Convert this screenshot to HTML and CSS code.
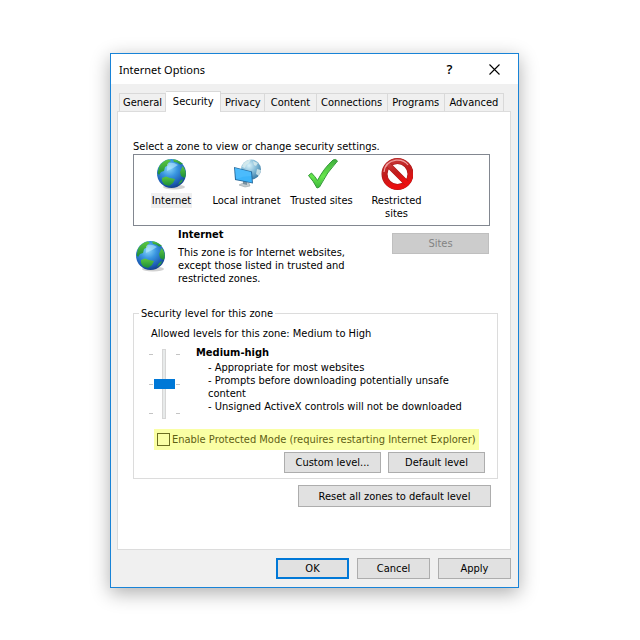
FILE: index.html
```html
<!DOCTYPE html>
<html lang="en">

<head>
    <meta charset="UTF-8">
    <title>Internet Options</title>
    <link rel="stylesheet" href="styles.css">
</head>

<body>
    <!-- shared globe drawing -->
    <svg class="defs" width="0" height="0" aria-hidden="true">
        <defs>
            <radialGradient id="sea" cx="0.42" cy="0.32" r="0.7">
                <stop offset="0" stop-color="#8cd8fa" />
                <stop offset="0.4" stop-color="#3a96e0" />
                <stop offset="0.8" stop-color="#1c5cb4" />
                <stop offset="1" stop-color="#123e88" />
            </radialGradient>
            <radialGradient id="pale-sea" cx="0.4" cy="0.3" r="0.8">
                <stop offset="0" stop-color="#d8f2fa" />
                <stop offset="0.5" stop-color="#7cb6d4" />
                <stop offset="1" stop-color="#2c6a96" />
            </radialGradient>
            <linearGradient id="land" x1="0" y1="0" x2="0" y2="1">
                <stop offset="0" stop-color="#5cc840" />
                <stop offset="1" stop-color="#1c8c38" />
            </linearGradient>
            <linearGradient id="tick" x1="0" y1="0" x2="0" y2="1">
                <stop offset="0" stop-color="#3fae3c" />
                <stop offset="0.6" stop-color="#66e64c" />
                <stop offset="1" stop-color="#3cb83a" />
            </linearGradient>
            <linearGradient id="stop" x1="0" y1="0" x2="0.3" y2="1">
                <stop offset="0" stop-color="#c83c3c" />
                <stop offset="0.5" stop-color="#c01c1c" />
                <stop offset="1" stop-color="#ea1010" />
            </linearGradient>
            <symbol id="globe" viewBox="0 0 32 32">
                <ellipse cx="18" cy="29" rx="11" ry="2.5" fill="#999" opacity="0.45" />
                <circle cx="15.500" cy="15.500" r="14.500" fill="url(#sea)" />
                <path d="M3 9C5 5 9 2 13 1.500L15 3L12 5L12.500 7L9 9L8 13L5 14L3 17L1.600 15Z" fill="url(#land)" />
                <path d="M17 1.200C21 1.500 25 4 27 6L24 6.500L21 4.500L18 4Z" fill="url(#land)" />
                <path d="M26.500 8L28 10C30.500 14 30 18 28.500 20L25 18L24 14Z" fill="url(#land)" />
                <path d="M6 20L10 18.500L14 20L19 21L17 25L13 28L8 26.500L6 23Z" fill="url(#land)" />
                <path d="M24 23L27 21L26 24L22 27Z" fill="#2c9c44" />
                <path d="M11 6Q16 3 22 7Q18 10 11 13Z" fill="#c8f0ff" opacity="0.5" />
            </symbol>
        </defs>
    </svg>

    <div class="dialog">
        <div class="titlebar">
            <span class="title">Internet Options</span>
            <button class="title-btn help" aria-label="Help">?</button>
            <button class="title-btn" aria-label="Close">
                <svg width="11" height="11" viewBox="0 0 11 11">
                    <path d="M0.500 0.500L10.500 10.500M10.500 0.500L0.500 10.500" stroke="#000" stroke-width="1.100" />
                </svg>
            </button>
        </div>

        <div class="content">
            <div class="tabs" role="tablist">
                <button class="tab" role="tab">General</button>
                <button class="tab active" role="tab" aria-selected="true">Security</button>
                <button class="tab" role="tab">Privacy</button>
                <button class="tab" role="tab">Content</button>
                <button class="tab" role="tab">Connections</button>
                <button class="tab" role="tab">Programs</button>
                <button class="tab" role="tab">Advanced</button>
            </div>

            <div class="panel">
                <div class="label">Select a zone to view or change security settings.</div>
                <div class="zones">
                    <button class="zone">
                        <svg width="32" height="32"><use href="#globe" /></svg>
                        <span class="zone-name selected">Internet</span>
                    </button>
                    <button class="zone">
                        <svg width="32" height="32" viewBox="0 0 32 32">
                            <circle cx="20" cy="11.500" r="10" fill="url(#pale-sea)" />
                            <path d="M12 6Q15 2 20 1.500L18 5L15 7L14 10L11 9ZM22 3L27 5L25 8L23 7ZM26 11L30 12L28 18L25 16Z" fill="#dceeed" opacity="0.8" />
                            <path d="M8 27L14 24L18 25L19 28L14 29Z" fill="#c4ccd0" stroke="#8b989f" stroke-width="0.500" />
                            <path d="M12 22L16 23L16 27L12 26Z" fill="#7890a0" />
                            <path d="M3 9L21 13.500L22 25.500L4 22Z" fill="#276a9c" />
                            <path d="M4 10L20 14L21 24.500L5 21.200Z" fill="#3cb4fa" />
                            <path d="M4 10L20 14L20.300 18Q12 18 5 21Z" fill="#66c8ff" opacity="0.35" />
                        </svg>
                        <span class="zone-name">Local intranet</span>
                    </button>
                    <button class="zone">
                        <svg width="32" height="32" viewBox="0 0 32 32">
                            <path d="M2.500 17.500L5.500 15Q9 18.500 11.500 22.500Q18 10 27 2Q30 0.500 31.500 3Q21 14 13.500 29L11 30Q7.500 23 2.500 17.500Z" fill="url(#tick)" stroke="#339838" stroke-width="1" />
                        </svg>
                        <span class="zone-name">Trusted sites</span>
                    </button>
                    <button class="zone">
                        <svg width="32" height="32" viewBox="0 0 32 32">
                            <circle cx="16.500" cy="16" r="13" fill="#fff" stroke="#a81818" stroke-width="6" />
                            <circle cx="16.500" cy="16" r="13" fill="none" stroke="url(#stop)" stroke-width="5" />
                            <path d="M7.500 7L25.500 25" stroke="#a81818" stroke-width="5.600" />
                            <path d="M7 6.500L26 25.500" stroke="url(#stop)" stroke-width="4.600" />
                            <path d="M3 14Q4 4 15 2.200Q23 1.500 27 7" fill="none" stroke="#f0a0a0" stroke-width="1.200" />
                        </svg>
                        <span class="zone-name">Restricted sites</span>
                    </button>
                </div>

                <div class="zone-info">
                    <svg class="info-icon" width="32" height="32"><use href="#globe" /></svg>
                    <div class="info-text">
                        <b>Internet</b>
                        <p>This zone is for Internet websites, except those listed in trusted and restricted zones.</p>
                    </div>
                    <button class="btn" disabled>Sites</button>
                </div>

                <fieldset class="level-box">
                    <legend>Security level for this zone</legend>
                    <label class="allowed" for="level">Allowed levels for this zone: Medium to High</label>
                    <div class="level">
                        <div class="slider">
                            <div class="ticks"><i></i><i></i><i></i></div>
                            <input type="range" id="level" min="0" max="2" value="1">
                            <div class="ticks"><i></i><i></i><i></i></div>
                        </div>
                        <div class="level-text">
                            <b>Medium-high</b>
                            <ul>
                                <li>- Appropriate for most websites</li>
                                <li>- Prompts before downloading potentially unsafe<br>content</li>
                                <li>- Unsigned ActiveX controls will not be downloaded</li>
                            </ul>
                        </div>
                    </div>
                    <label class="protected">
                        <input type="checkbox" id="protected-mode">
                        <span>Enable Protected Mode (requires restarting Internet Explorer)</span>
                    </label>
                    <div class="level-buttons">
                        <button class="btn">Custom level...</button>
                        <button class="btn">Default level</button>
                    </div>
                </fieldset>

                <div class="reset">
                    <button class="btn wide">Reset all zones to default level</button>
                </div>
            </div>

            <div class="footer">
                <button class="btn ok">OK</button>
                <button class="btn">Cancel</button>
                <button class="btn">Apply</button>
            </div>
        </div>
    </div>
</body>

</html>
```

FILE: styles.css
```css
* {
    box-sizing: border-box;
}

body {
    margin: 0;
    padding: 53px 121px 52px 110px;
    background-color: #fff;
    color: #000;
    font-family: "DejaVu Sans Condensed", "Noto Sans", sans-serif;
    font-size: 11px;
    line-height: 13px;
}

button {
    font: inherit;
    color: inherit;
    padding: 0;
    white-space: nowrap;
}

.defs {
    position: absolute;
}

.dialog {
    border: 1px solid #1883d7;
    background-color: #f0f0f0;
    box-shadow: 0 5px 18px rgba(0, 0, 0, 0.32);
}

.titlebar {
    display: flex;
    align-items: center;
    height: 30px;
    padding: 0 1px 0 8px;
    background-color: #fff;
}

.title {
    flex: 1;
    font-family: "Noto Sans", sans-serif;
}

.title-btn {
    display: flex;
    align-items: center;
    justify-content: center;
    width: 45px;
    height: 28px;
    border: none;
    background: none;
}

.help {
    font-family: "Open Sans", sans-serif;
    font-size: 13px;
    font-weight: 600;
}

.content {
    padding: 7px 7px 8px 6px;
}

/* tabs */
.tabs {
    display: grid;
    grid-template-columns: 47fr 55fr 44fr 51fr 71fr 57fr 59fr;
    align-items: end;
    padding: 0 7px 0 2px;
}

.tab {
    height: 18px;
    border: 1px solid #d9d9d9;
    border-width: 1px 1px 0 0;
    background-color: #f0f0f0;
}

.tab:first-child {
    border-left-width: 1px;
}

.tab.active {
    height: 21px;
    margin-bottom: -1px;
    padding-bottom: 2px;
    background-color: #fff;
    z-index: 1;
}

.panel {
    padding: 28px 12px 42px 15px;
    border: 1px solid #dcdcdc;
    background-color: #fff;
}

/* zone list */
.zones {
    display: flex;
    min-height: 72px;
    margin: 1px 8px 0 0;
    padding: 3px 0 0;
    border: 1px solid #828790;
}

.zone {
    display: flex;
    flex-direction: column;
    align-items: center;
    width: 75px;
    border: none;
    background: none;
}

.zone-name {
    margin-top: 3px;
    padding: 1px;
    white-space: normal;
}

.zone:nth-child(2) .zone-name,
.zone:nth-child(3) .zone-name {
    white-space: nowrap;
}

.selected {
    background-color: #f0f0f0;
}

.zone-info {
    display: flex;
    align-items: flex-start;
    min-height: 81px;
    padding: 2px 9px 0 2px;
}

.info-icon {
    margin-top: 12px;
}

.info-text {
    flex: 1;
    margin-left: 11px;
}

.info-text p {
    max-width: 180px;
    margin: 5px 0 0;
}

b {
    display: block;
}

/* buttons */
.btn {
    width: 97px;
    height: 21px;
    border: 1px solid #adadad;
    background-color: #e1e1e1;
}

.btn:disabled {
    border-color: #bfbfbf;
    background-color: #ccc;
    color: #838383;
}

.zone-info .btn {
    margin-top: 5px;
}

.wide {
    width: 193px;
    height: 22px;
}

/* security level */
.level-box {
    min-width: 0;
    margin: 0;
    padding: 7px 12px 5px 15px;
    border: 1px solid #dcdcdc;
}

.level-box legend {
    margin-left: -10px;
    padding: 0 2px;
}

.allowed {
    display: block;
    padding-left: 2px;
}

.level {
    display: flex;
    margin-top: 6px;
}

.slider {
    display: flex;
    height: 70px;
    margin-top: 3px;
}

.ticks {
    display: flex;
    flex-direction: column;
    justify-content: space-between;
    padding: 5px 0;
}

.ticks:last-child {
    margin-left: 2px;
}

.ticks i {
    width: 4px;
    height: 1px;
    background-color: #c4c4c4;
}

input[type="range"] {
    appearance: none;
    writing-mode: vertical-lr;
    direction: rtl;
    width: 21px;
    height: 70px;
    margin: 0;
    background: none;
}

input[type="range"]::-webkit-slider-runnable-track {
    width: 4px;
    height: 70px;
    border: 1px solid #d6d6d6;
    background-color: #e7eaea;
}

input[type="range"]::-webkit-slider-thumb {
    appearance: none;
    width: 21px;
    height: 10px;
    margin-left: -9px;
    background-color: #0078d7;
}

.level-text {
    margin-left: 16px;
}

.level-text ul {
    margin: 2px 0 0;
    padding: 0 0 0 12px;
    list-style: none;
    white-space: nowrap;
}

.protected {
    display: flex;
    align-items: center;
    gap: 2px;
    width: fit-content;
    height: 21px;
    margin: 10px 0 2px 5px;
    padding: 0 3px;
    background-color: #faffa5;
    color: #5f6014;
    white-space: nowrap;
}

.protected input {
    appearance: none;
    width: 13px;
    height: 13px;
    margin: 0;
    border: 1px solid #6b6d20;
}

.level-buttons {
    display: flex;
    justify-content: flex-end;
    gap: 7px;
}

.reset {
    display: flex;
    justify-content: flex-end;
    padding: 6px 7px 0 0;
}

.footer {
    display: flex;
    justify-content: flex-end;
    gap: 8px;
    padding-top: 8px;
}

.footer .btn {
    width: 73px;
}

.footer .ok {
    border: 2px solid #0078d7;
}
```
